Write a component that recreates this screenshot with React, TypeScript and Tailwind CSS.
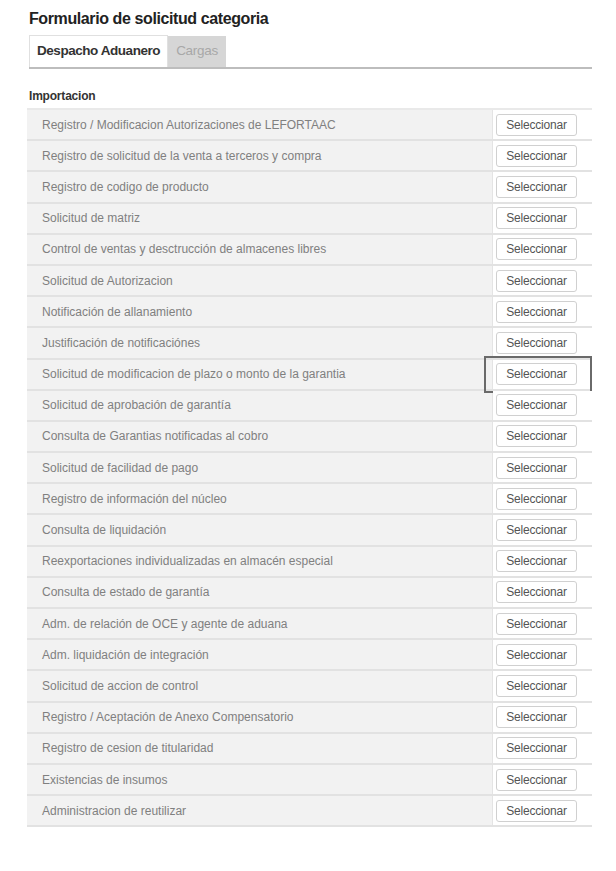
import { FC } from "react";

const items: string[] = [
  "Registro / Modificacion Autorizaciones de LEFORTAAC",
  "Registro de solicitud de la venta a terceros y compra",
  "Registro de codigo de producto",
  "Solicitud de matriz",
  "Control de ventas y desctrucción de almacenes libres",
  "Solicitud de Autorizacion",
  "Notificación de allanamiento",
  "Justificación de notificaciónes",
  "Solicitud de modificacion de plazo o monto de la garantia",
  "Solicitud de aprobación de garantía",
  "Consulta de Garantias notificadas al cobro",
  "Solicitud de facilidad de pago",
  "Registro de información del núcleo",
  "Consulta de liquidación",
  "Reexportaciones individualizadas en almacén especial",
  "Consulta de estado de garantía",
  "Adm. de relación de OCE y agente de aduana",
  "Adm. liquidación de integración",
  "Solicitud de accion de control",
  "Registro / Aceptación de Anexo Compensatorio",
  "Registro de cesion de titularidad",
  "Existencias de insumos",
  "Administracion de reutilizar",
];

const Row: FC<{ label: string; focused?: boolean }> = ({ label, focused }) => {
  return (
    <div className="flex h-[31.2px] border-b-2 border-[#e2e2e2]">
      {/* label cell */}
      <div className="flex items-center flex-1 bg-[#f2f2f2] border-r border-[#e4e4e4] pl-[15px] text-[12px] text-[#808080]">
        {label}
      </div>
      {/* action cell */}
      <div className="relative flex items-center w-[99px] bg-white pl-[3px]">
        <button className="h-[22px] w-[81px] rounded-[3px] border border-[#d0d0d0] bg-white text-[12px] tracking-[-0.2px] text-[#555]">
          Seleccionar
        </button>
        {focused && (
          <div className="absolute left-[-9px] top-[-4px] w-[108px] h-[37px] border-2 border-[#6a6a6a]" />
        )}
      </div>
    </div>
  );
};

const App: FC = () => {
  return (
    <div className="min-h-screen bg-white pl-[27px] pr-[24px] pt-[8px] font-['Liberation_Sans',sans-serif]">
      <h1 className="pl-[2px] text-[16px] font-bold tracking-[-0.4px] text-[#222] leading-[22px]">
        Formulario de solicitud categoria
      </h1>

      {/* Tabs */}
      <div className="mt-[7px] ml-[2px] flex items-end border-b-2 border-[#bdbdbd] h-[32px]">
        <div className="h-[32px] px-[7px] flex items-center bg-white border border-b-0 border-[#e0e0e0] text-[13.5px] font-bold tracking-[-0.45px] text-[#333]">
          Despacho Aduanero
        </div>
        <div className="h-[31px] px-[8px] flex items-center bg-[#d6d6d6] text-[13.5px] tracking-[-0.3px] text-[#a8a8a8]">
          Cargas
        </div>
      </div>

      <div className="ml-[2px] mt-[19px] text-[12px] font-bold tracking-[-0.2px] text-[#333] leading-[16px]">
        Importacion
      </div>

      {/* Table */}
      <div className="mt-[4px] border-t-2 border-[#e9e9e9]">
        {items.map((label, i) => (
          <Row key={label} label={label} focused={i === 8} />
        ))}
      </div>
    </div>
  );
};

export default App;
